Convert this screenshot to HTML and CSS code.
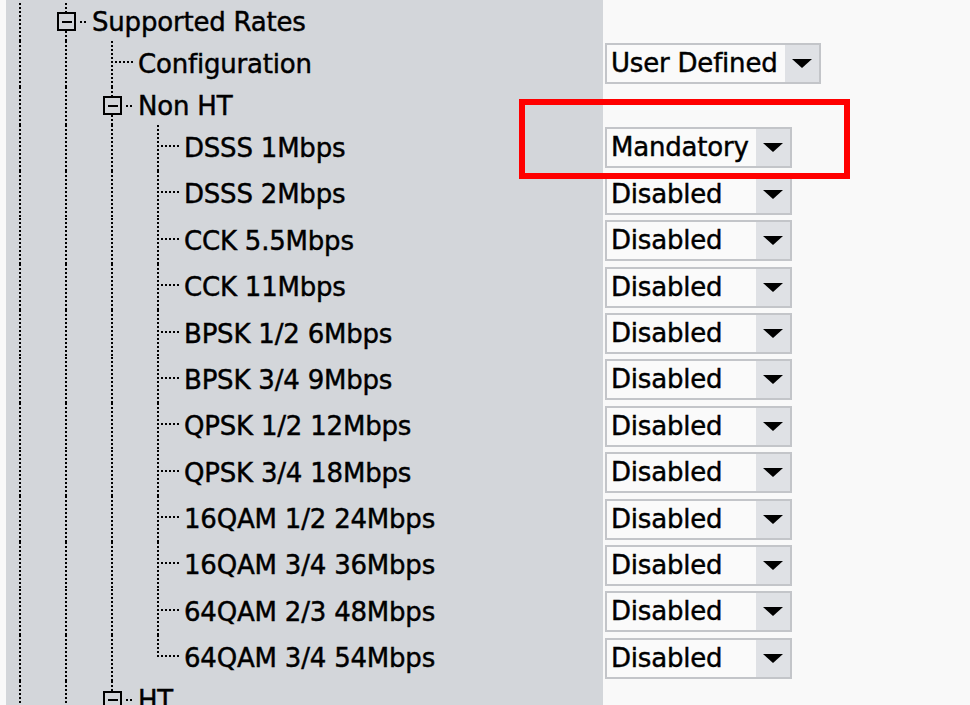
FILE: index.html
```html
<!DOCTYPE html>
<html lang="en">
<head>
    <meta charset="UTF-8">
    <title>Supported Rates</title>
    <link rel="stylesheet" href="styles.css">
</head>
<body>
    <div class="sheet">
        <!-- Supported Rates -->
        <div class="row node">
            <div class="label">
                <span class="guide line"></span>
                <span class="stem line"><span class="toggle"></span><span class="lead"></span></span>
                <span class="name">Supported Rates</span>
            </div>
        </div>
        <div class="row">
            <div class="label">
                <span class="guide line"></span><span class="guide line"></span>
                <span class="stem branch"></span>
                <span class="name">Configuration</span>
            </div>
            <div class="value">
                <div class="select wide"><span class="select-value">User Defined</span><span class="select-arrow"></span></div>
            </div>
        </div>

        <!-- Non HT -->
        <div class="row node">
            <div class="label">
                <span class="guide line"></span><span class="guide line"></span>
                <span class="stem line"><span class="toggle"></span><span class="lead"></span></span>
                <span class="name">Non HT</span>
            </div>
        </div>
        <div class="row">
            <div class="label">
                <span class="guide line"></span><span class="guide line"></span><span class="guide line"></span>
                <span class="stem branch"></span>
                <span class="name">DSSS 1Mbps</span>
            </div>
            <div class="value">
                <div class="select"><span class="select-value">Mandatory</span><span class="select-arrow"></span></div>
            </div>
        </div>
        <div class="row">
            <div class="label">
                <span class="guide line"></span><span class="guide line"></span><span class="guide line"></span>
                <span class="stem branch"></span>
                <span class="name">DSSS 2Mbps</span>
            </div>
            <div class="value">
                <div class="select"><span class="select-value">Disabled</span><span class="select-arrow"></span></div>
            </div>
        </div>
        <div class="row">
            <div class="label">
                <span class="guide line"></span><span class="guide line"></span><span class="guide line"></span>
                <span class="stem branch"></span>
                <span class="name">CCK 5.5Mbps</span>
            </div>
            <div class="value">
                <div class="select"><span class="select-value">Disabled</span><span class="select-arrow"></span></div>
            </div>
        </div>
        <div class="row">
            <div class="label">
                <span class="guide line"></span><span class="guide line"></span><span class="guide line"></span>
                <span class="stem branch"></span>
                <span class="name">CCK 11Mbps</span>
            </div>
            <div class="value">
                <div class="select"><span class="select-value">Disabled</span><span class="select-arrow"></span></div>
            </div>
        </div>
        <div class="row">
            <div class="label">
                <span class="guide line"></span><span class="guide line"></span><span class="guide line"></span>
                <span class="stem branch"></span>
                <span class="name">BPSK 1/2 6Mbps</span>
            </div>
            <div class="value">
                <div class="select"><span class="select-value">Disabled</span><span class="select-arrow"></span></div>
            </div>
        </div>
        <div class="row">
            <div class="label">
                <span class="guide line"></span><span class="guide line"></span><span class="guide line"></span>
                <span class="stem branch"></span>
                <span class="name">BPSK 3/4 9Mbps</span>
            </div>
            <div class="value">
                <div class="select"><span class="select-value">Disabled</span><span class="select-arrow"></span></div>
            </div>
        </div>
        <div class="row">
            <div class="label">
                <span class="guide line"></span><span class="guide line"></span><span class="guide line"></span>
                <span class="stem branch"></span>
                <span class="name">QPSK 1/2 12Mbps</span>
            </div>
            <div class="value">
                <div class="select"><span class="select-value">Disabled</span><span class="select-arrow"></span></div>
            </div>
        </div>
        <div class="row">
            <div class="label">
                <span class="guide line"></span><span class="guide line"></span><span class="guide line"></span>
                <span class="stem branch"></span>
                <span class="name">QPSK 3/4 18Mbps</span>
            </div>
            <div class="value">
                <div class="select"><span class="select-value">Disabled</span><span class="select-arrow"></span></div>
            </div>
        </div>
        <div class="row">
            <div class="label">
                <span class="guide line"></span><span class="guide line"></span><span class="guide line"></span>
                <span class="stem branch"></span>
                <span class="name">16QAM 1/2 24Mbps</span>
            </div>
            <div class="value">
                <div class="select"><span class="select-value">Disabled</span><span class="select-arrow"></span></div>
            </div>
        </div>
        <div class="row">
            <div class="label">
                <span class="guide line"></span><span class="guide line"></span><span class="guide line"></span>
                <span class="stem branch"></span>
                <span class="name">16QAM 3/4 36Mbps</span>
            </div>
            <div class="value">
                <div class="select"><span class="select-value">Disabled</span><span class="select-arrow"></span></div>
            </div>
        </div>
        <div class="row">
            <div class="label">
                <span class="guide line"></span><span class="guide line"></span><span class="guide line"></span>
                <span class="stem branch"></span>
                <span class="name">64QAM 2/3 48Mbps</span>
            </div>
            <div class="value">
                <div class="select"><span class="select-value">Disabled</span><span class="select-arrow"></span></div>
            </div>
        </div>
        <div class="row">
            <div class="label">
                <span class="guide line"></span><span class="guide line"></span><span class="guide line"></span>
                <span class="stem branch last"></span>
                <span class="name">64QAM 3/4 54Mbps</span>
            </div>
            <div class="value">
                <div class="select"><span class="select-value">Disabled</span><span class="select-arrow"></span></div>
            </div>
        </div>

        <!-- HT -->
        <div class="row node">
            <div class="label">
                <span class="guide line"></span><span class="guide line"></span>
                <span class="stem line"><span class="toggle"></span><span class="lead"></span></span>
                <span class="name">HT</span>
            </div>
        </div>
    </div>

    <div class="callout"></div>
</body>
</html>
```

FILE: styles.css
```css
:root {
    --page-bg: #f9f9f9;
    --panel-bg: #d3d6da;
    --text-color: #000000;
    --field-bg: #fafafa;
    --field-border: #c3c5c9;
    --button-bg: #dfe1e5;
    --dots-v: repeating-linear-gradient(to bottom, #000 0 2px, transparent 2px 4px);
    --dots-h: repeating-linear-gradient(to right, #000 0 2px, transparent 2px 4px);
}

html, body {
    overflow: hidden;
}

body {
    margin: 0;
    background-color: var(--page-bg);
    font-family: 'DejaVu Sans', Verdana, sans-serif;
    font-size: 26px;
    letter-spacing: -0.2px;
    color: var(--text-color);
    -webkit-text-stroke: 0.45px currentColor;
}

.sheet {
    margin-left: 6px;
    min-height: 100vh;
    padding-top: 3.2px;
    background: linear-gradient(to right, var(--panel-bg) 597px, transparent 597px);
}

/* Tree rows */
.row {
    display: flex;
    height: 46.4px;
}

.row.node {
    height: 37.6px;
}

.label {
    display: flex;
    width: 597px;
    flex: none;
}

.name {
    align-self: center;
    white-space: nowrap;
}

/* Indent guides and connectors */
.guide {
    width: 46px;
    flex: none;
}

.stem {
    width: 40px;
    flex: none;
    display: flex;
    align-items: center;
}

.guide.line,
.stem.line {
    background: var(--dots-v) 13px 0 / 2px 100% no-repeat;
}

.stem.branch {
    background:
        var(--dots-v) 13px 0 / 2px 100% no-repeat,
        var(--dots-h) 17px calc(50% - 2px) / 19px 2px no-repeat;
}

.stem.branch.last {
    background:
        var(--dots-v) 13px 0 / 2px calc(50% - 1px) no-repeat,
        var(--dots-h) 17px calc(50% - 2px) / 19px 2px no-repeat;
}

.toggle {
    width: 19px;
    height: 19px;
    margin-left: 5px;
    box-sizing: border-box;
    border: 2px solid #000;
    background-color: var(--panel-bg);
    display: flex;
    align-items: center;
    justify-content: center;
}

.toggle::after {
    content: '';
    width: 10px;
    height: 2px;
    background-color: #000;
}

.lead {
    width: 6px;
    height: 2px;
    margin-left: 4px;
    background: var(--dots-h);
}

/* Drop-down fields */
.value {
    display: flex;
    align-items: center;
    padding-left: 2px;
}

.select {
    display: flex;
    width: 187px;
    height: 41px;
    box-sizing: border-box;
    border: 2px solid var(--field-border);
    background-color: var(--field-bg);
}

.select.wide {
    width: 216px;
}

.select-value {
    flex: 1;
    padding-left: 4px;
    line-height: 37px;
    white-space: nowrap;
}

.select-arrow {
    width: 34px;
    flex: none;
    background-color: var(--button-bg);
    display: flex;
    align-items: center;
    justify-content: center;
}

.select-arrow::before {
    content: '';
    border-left: 10px solid transparent;
    border-right: 10px solid transparent;
    border-top: 9px solid #000;
}

/* Red highlight drawn over the Mandatory rate */
.callout {
    position: absolute;
    left: 519px;
    top: 99px;
    width: 331px;
    height: 80px;
    box-sizing: border-box;
    border: 6px solid #ff0000;
}
```
